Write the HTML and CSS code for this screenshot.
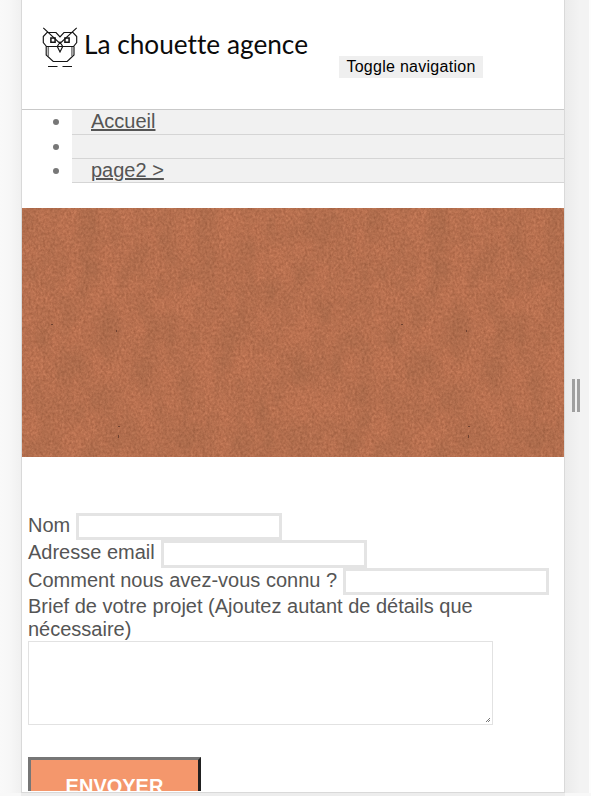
FILE: index.html
```html
<!DOCTYPE html>
<html lang="fr">
<head>
<meta charset="utf-8">
<title>La chouette agence</title>
<link rel="stylesheet" href="styles.css">
</head>
<body>
<aside class="gutter gutter-left"></aside>
<main class="device">
  <header class="header">
    <svg class="logo" width="270" height="50" viewBox="0 0 270 50" role="img" aria-label="La chouette agence">
      <g fill="none" stroke="#151515" stroke-width="1.15">
        <path d="M3.300 4.800 20 20.500 36.700 4.800M6.500 23.500 3.300 19.500v-6L7 9.500h9l4 4.500 4-4.500h9l3.700 4v6l-3.200 4H6.200V32l7 6.500h14L34 32v-8.500M20 19l2.700 4.500L20 29l-2.700-5.500z"/>
        <path d="M8.300 24v9M31.900 24v9" stroke="#777" stroke-width="1.500"/>
        <path d="M10.900 15h4.200v4.200h-4.200zM24.900 15h4.200v4.200h-4.200z" stroke-width="1.500"/>
        <path d="M8 43.500h9.500M22.500 43.500H32"/>
      </g>
      <text class="logo-text" x="44" y="31" textLength="224" lengthAdjust="spacingAndGlyphs">La chouette agence</text>
    </svg>
    <button class="toggle" type="button">Toggle navigation</button>
  </header>
  <ul class="menu">
    <li><a href="#">Accueil</a></li>
    <li></li>
    <li><a href="#">page2 &gt;</a></li>
  </ul>
  <svg class="banner" width="542" height="249">
    <defs>
      <filter id="grain" x="0" y="0" width="100%" height="100%" color-interpolation-filters="sRGB">
        <feTurbulence type="fractalNoise" baseFrequency=".42 .36" numOctaves="3" seed="8" stitchTiles="stitch"/>
        <feColorMatrix values=".17 .10 0 0 .595  .14 .08 0 0 .335  .12 .07 0 0 .22  0 0 0 0 1"/>
      </filter>
      <filter id="fibres" x="0" y="0" width="100%" height="100%" color-interpolation-filters="sRGB">
        <feTurbulence type="fractalNoise" baseFrequency=".05 .03" numOctaves="4" seed="4" stitchTiles="stitch"/>
        <feColorMatrix values="0 0 0 0 .45  0 0 0 0 .31  0 0 0 0 .21  .36 0 0 0 -.10"/>
      </filter>
      <pattern id="paper" width="350" height="249" patternUnits="userSpaceOnUse">
        <rect width="350" height="249" filter="url(#grain)"/>
        <rect width="350" height="249" filter="url(#fibres)"/>
        <path d="M96 227h1v3h-1zM96 218h2v1h-2zM94 122h1v2h-1zM29 116h2v1h-2z" fill="#70412f"/>
      </pattern>
    </defs>
    <rect width="542" height="249" fill="url(#paper)"/>
  </svg>
  <form class="contact">
    <div class="field"><label for="nom">Nom</label><input id="nom"></div>
    <div class="field"><label for="email">Adresse email</label><input id="email"></div>
    <div class="field field-last"><label for="source">Comment nous avez-vous connu ?</label><input id="source"></div>
    <label class="brief-label" for="brief">Brief de votre projet (Ajoutez autant de détails que nécessaire)</label>
    <textarea id="brief"></textarea>
    <button class="send" type="button">ENVOYER</button>
  </form>
</main>
<aside class="gutter gutter-right"><i class="grip"></i></aside>
<footer class="under"></footer>
</body>
</html>
```
FILE: styles.css
```css
* { box-sizing: border-box; }
body {
  margin: 0;
  width: 591px;
  height: 796px;
  overflow: hidden;
  display: grid;
  grid-template-columns: 21px 544px 26px;
  grid-template-rows: 793px 3px;
  background: #f8f8f8;
  color: #555;
  font: 20px/23px "Liberation Sans", sans-serif;
}
.gutter-left { background: linear-gradient(90deg, #f9f9f9, #f7f7f7 45%, #f0f0f0); }
.gutter-right {
  display: flex;
  align-items: center;
  padding: 0 0 2px 7px;
  background: linear-gradient(90deg, #ebebeb, #f3f3f3 15px, #f3f3f3 24px, #fdfdfd 24px);
}
.grip {
  width: 8px;
  height: 33px;
  border: solid #a0a0a0;
  border-width: 0 3px;
}
.under { grid-column: 2; background: #ededed; }
.device {
  border: 1px solid #d9d9d9;
  border-top: 0;
  padding-bottom: 1px;
  background: #fff;
  overflow: hidden;
}
.header {
  height: 110px;
  border-bottom: 1px solid #c9c9c9;
  display: flex;
  align-items: flex-start;
  padding: 23px 0 0 18px;
}
.logo { flex: none; }
.logo-text {
  font: 26.500px Lato, sans-serif;
  font-variant-ligatures: none;
  fill: #0b0b0b;
}
.toggle {
  width: 144px;
  height: 22px;
  margin: 33px 0 0 29px;
  padding: 0;
  border: 0;
  background: #efefef;
  color: #000;
  font: 16px/22px "Liberation Sans", sans-serif;
  letter-spacing: .27px;
}
.menu { margin: 0; padding: 0 0 0 50px; height: 98px; color: #777; }
.menu li {
  height: 24px;
  padding-left: 19px;
  background: #f1f1f1;
  border-bottom: 1px solid #d5d5d5;
}
.menu li:first-child { height: 25px; }
.menu a { color: #555; }
.banner { display: block; }
.contact { height: 334px; overflow: hidden; padding: 56px 0 0 6px; }
.field { display: flex; height: 27px; line-height: 25px; }
.field + .field { height: 28px; }
.field.field-last { height: 27px; }
.field input {
  flex: none;
  width: 206px;
  height: 27px;
  margin-left: 6px;
  padding: 0;
  border: 3px solid #e4e4e4;
  background: #fff;
}
.field + .field input { height: 28px; }
.field.field-last input { height: 27px; }
.brief-label { display: block; width: 480px; }
#brief {
  display: block;
  width: 465px;
  height: 84px;
  margin: 0 0 32px;
  border: 1px solid #e2e2e2;
  resize: none;
  background: linear-gradient(135deg, transparent 40%, #777 40% 55%, transparent 55% 70%, #777 70% 85%, transparent 85%) right 2px bottom 2px / 4px 4px no-repeat #fff;
}
.send {
  display: block;
  width: 173px;
  height: 62px;
  padding: 0 0 4px;
  border: 3px solid;
  border-color: #767676 #212121 #212121 #767676;
  background: #f4976c;
  color: #fff;
  font: bold 20px/52px "Liberation Sans", sans-serif;
}
```
